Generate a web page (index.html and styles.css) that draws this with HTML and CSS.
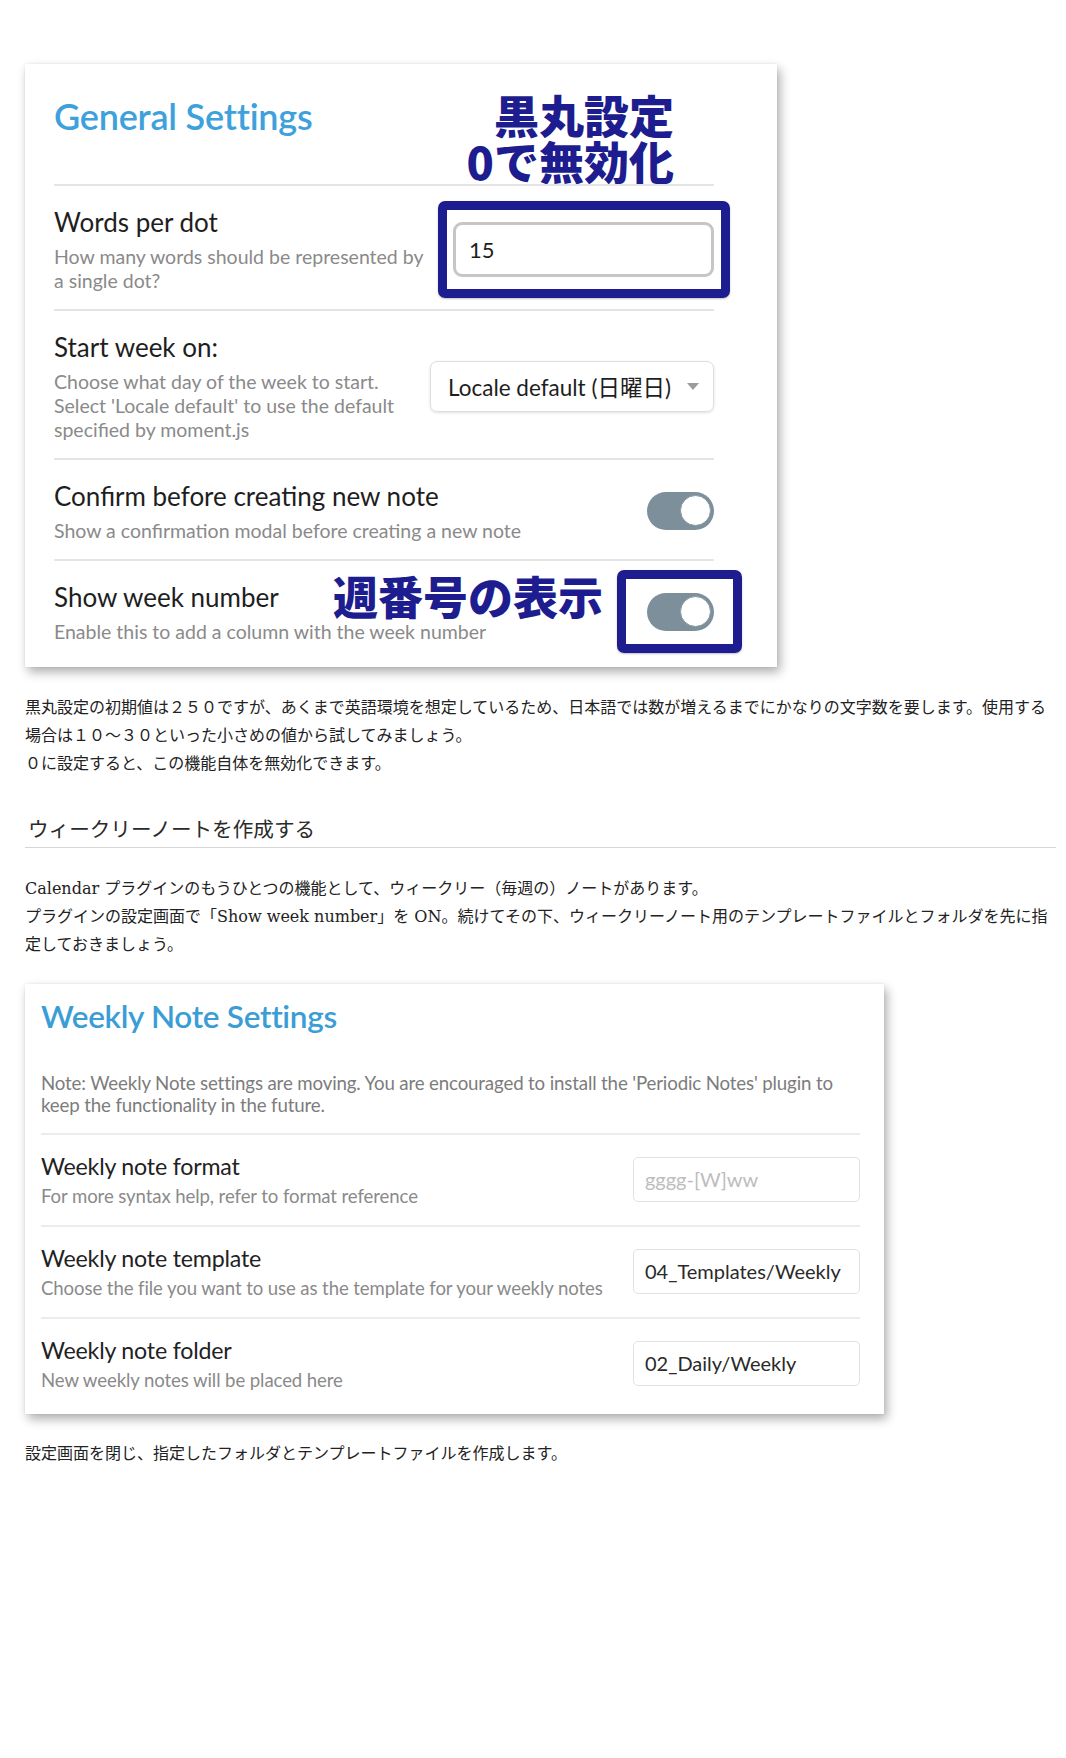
FILE: index.html
```html
<!DOCTYPE html>
<html lang="ja">
<head>
<meta charset="utf-8">
<title>Calendar プラグイン設定</title>
<link rel="stylesheet" href="styles.css">
</head>
<body>
<main class="page">
  <section class="card card-general">
    <div class="card-head">
      <h2 class="card-title">General Settings</h2>
      <div class="anno anno-head">
        <div class="anno-line">黒丸設定</div>
        <div class="anno-line">0で無効化</div>
      </div>
    </div>

    <div class="setting">
      <div class="info">
        <div class="name">Words per dot</div>
        <div class="desc">How many words should be represented by<br>a single dot?</div>
      </div>
      <div class="control framed framed-input">
        <div class="text-input">15</div>
      </div>
    </div>

    <div class="setting">
      <div class="info">
        <div class="name">Start week on:</div>
        <div class="desc">Choose what day of the week to start.<br>Select 'Locale default' to use the default<br>specified by moment.js</div>
      </div>
      <div class="control">
        <div class="dropdown"><span>Locale default (日曜日)</span><span class="caret"></span></div>
      </div>
    </div>

    <div class="setting">
      <div class="info">
        <div class="name">Confirm before creating new note</div>
        <div class="desc">Show a confirmation modal before creating a new note</div>
      </div>
      <div class="control">
        <div class="toggle"><span class="knob"></span></div>
      </div>
    </div>

    <div class="setting setting-last">
      <div class="info">
        <div class="name">Show week number</div>
        <div class="desc">Enable this to add a column with the week number</div>
      </div>
      <div class="anno anno-week">週番号の表示</div>
      <div class="control framed framed-toggle">
        <div class="toggle"><span class="knob"></span></div>
      </div>
    </div>
  </section>

  <p class="prose prose-first">黒丸設定の初期値は２５０ですが、あくまで英語環境を想定しているため、日本語では数が増えるまでにかなりの文字数を要します。使用する場合は１０～３０といった小さめの値から試してみましょう。<br>０に設定すると、この機能自体を無効化できます。</p>

  <h3 class="section-heading">ウィークリーノートを作成する</h3>

  <p class="prose prose-after-heading">Calendar プラグインのもうひとつの機能として、ウィークリー（毎週の）ノートがあります。<br>プラグインの設定画面で「Show week number」を ON。続けてその下、ウィークリーノート用のテンプレートファイルとフォルダを先に指定しておきましょう。</p>

  <section class="card card-weekly">
    <div class="weekly-head">
      <h2 class="weekly-title">Weekly Note Settings</h2>
      <div class="weekly-note">Note: Weekly Note settings are moving. You are encouraged to install the 'Periodic Notes' plugin to<br>keep the functionality in the future.</div>
    </div>
    <div class="w-setting">
      <div class="info">
        <div class="w-name">Weekly note format</div>
        <div class="w-desc">For more syntax help, refer to format reference</div>
      </div>
      <div class="w-input placeholder">gggg-[W]ww</div>
    </div>
    <div class="w-setting">
      <div class="info">
        <div class="w-name">Weekly note template</div>
        <div class="w-desc">Choose the file you want to use as the template for your weekly notes</div>
      </div>
      <div class="w-input">04_Templates/Weekly</div>
    </div>
    <div class="w-setting">
      <div class="info">
        <div class="w-name">Weekly note folder</div>
        <div class="w-desc">New weekly notes will be placed here</div>
      </div>
      <div class="w-input">02_Daily/Weekly</div>
    </div>
  </section>

  <p class="prose prose-last">設定画面を閉じ、指定したフォルダとテンプレートファイルを作成します。</p>
</main>
</body>
</html>
```

FILE: styles.css
```css
html, body {
  margin: 0;
  padding: 0;
  background: #ffffff;
}

.page {
  padding: 64px 10px 0 25px;
  font-family: "DejaVu Serif", "Noto Sans CJK JP", serif;
  color: #222222;
}

/* ---------- cards ---------- */
.card {
  background: #ffffff;
  box-sizing: border-box;
  box-shadow: 3px 5px 10px rgba(0, 0, 0, 0.32), 0 0 2px rgba(0, 0, 0, 0.08);
  font-family: "Lato", "Noto Sans CJK JP", sans-serif;
}

.card-general {
  width: 752px;
  padding: 0 63px 7px 29px;
}

.card-head {
  position: relative;
  height: 120px;
  box-sizing: border-box;
  padding-top: 32px;
}

.card-title {
  margin: 0;
  font-size: 36px;
  line-height: 40px;
  font-weight: 600;
  color: #3ea1dc;
  letter-spacing: -0.2px;
}

.anno {
  font-family: "Noto Sans CJK JP", sans-serif;
  font-weight: 900;
  color: #1d1d8f;
  font-size: 45px;
  line-height: 46px;
  white-space: nowrap;
}

.anno-head {
  position: absolute;
  right: 40px;
  top: 28px;
  text-align: right;
}

.anno-line {
  height: 46px;
  overflow: visible;
}

.setting {
  position: relative;
  display: flex;
  justify-content: space-between;
  align-items: center;
  border-top: 2px solid #e4e4e4;
  padding: 19px 0 16px;
}

.info {
  display: flex;
  flex-direction: column;
}

.name {
  font-size: 26px;
  line-height: 34px;
  color: #1e1e1e;
}

.desc {
  margin-top: 6px;
  font-size: 19.5px;
  line-height: 24px;
  color: #8a8a8a;
}

.control {
  flex: none;
}

.framed {
  position: relative;
}

.framed::after {
  content: "";
  position: absolute;
  border: 9px solid #1d1d8f;
  border-radius: 7px;
  box-shadow: 0 1px 2px rgba(0, 0, 0, 0.25);
}

.framed-input::after {
  left: -15px;
  right: -16px;
  top: -21px;
  bottom: -21px;
}

.framed-toggle::after {
  left: -30px;
  right: -28px;
  top: -23px;
  bottom: -22px;
}

.text-input {
  width: 261px;
  height: 55px;
  box-sizing: border-box;
  border: 3px solid #c6c6c6;
  border-radius: 9px;
  padding-left: 13px;
  display: flex;
  align-items: center;
  font-size: 22px;
  color: #1e1e1e;
}

.dropdown {
  width: 284px;
  height: 51px;
  box-sizing: border-box;
  border: 1px solid #dedede;
  border-radius: 7px;
  box-shadow: 0 1px 3px rgba(0, 0, 0, 0.12);
  padding: 0 14px 0 17px;
  display: flex;
  align-items: center;
  justify-content: space-between;
  font-size: 22.5px;
  color: #1e1e1e;
  white-space: nowrap;
}

.caret {
  width: 0;
  height: 0;
  border-left: 6px solid transparent;
  border-right: 6px solid transparent;
  border-top: 7px solid #9c9c9c;
}

.toggle {
  position: relative;
  width: 67px;
  height: 38px;
  border-radius: 19px;
  background: #7c8f9b;
}

.knob {
  position: absolute;
  right: 3px;
  top: 3px;
  width: 31px;
  height: 31px;
  box-sizing: border-box;
  border-radius: 50%;
  background: #ffffff;
  border: 1px solid #8797a2;
}

.anno-week {
  position: absolute;
  left: 279px;
  top: 12px;
}

/* ---------- prose ---------- */
.prose {
  margin: 0;
  font-size: 16px;
  line-height: 28px;
  color: #222222;
}

.prose-first {
  margin-top: 27px;
}

.section-heading {
  margin: 37px 0 0;
  font-family: "DejaVu Serif", "Noto Sans CJK JP", serif;
  font-weight: 400;
  font-size: 20.6px;
  line-height: 30px;
  color: #2a2a2a;
  padding: 0 0 2px 3px;
  border-bottom: 1px solid #d6d6d6;
}

.prose-after-heading {
  margin-top: 27px;
}

.prose-last {
  margin-top: 26px;
}

/* ---------- weekly card ---------- */
.card-weekly {
  width: 859px;
  margin-top: 25px;
  padding: 0 24px 5px 16px;
}

.weekly-head {
  padding: 14px 0 17px;
}

.weekly-title {
  margin: 0;
  font-size: 31.5px;
  line-height: 36px;
  font-weight: 600;
  color: #3b9dd6;
  letter-spacing: -0.3px;
}

.weekly-note {
  margin-top: 38px;
  font-size: 18.7px;
  line-height: 22px;
  color: #7c7c7c;
  letter-spacing: -0.15px;
}

.w-setting {
  display: flex;
  justify-content: space-between;
  align-items: center;
  border-top: 2px solid #ececec;
  padding: 16px 0 18px;
}

.w-name {
  font-size: 23.2px;
  line-height: 30px;
  color: #222222;
  letter-spacing: -0.2px;
}

.w-desc {
  margin-top: 4px;
  font-size: 18.6px;
  line-height: 22px;
  color: #8a8a8a;
  letter-spacing: -0.1px;
}

.w-input {
  flex: none;
  width: 227px;
  height: 45px;
  box-sizing: border-box;
  border: 1px solid #e2e2e2;
  border-radius: 5px;
  padding-left: 11px;
  display: flex;
  align-items: center;
  font-size: 20px;
  color: #2a2a2a;
  white-space: nowrap;
}

.w-input.placeholder {
  color: #bdbdbd;
}
```
